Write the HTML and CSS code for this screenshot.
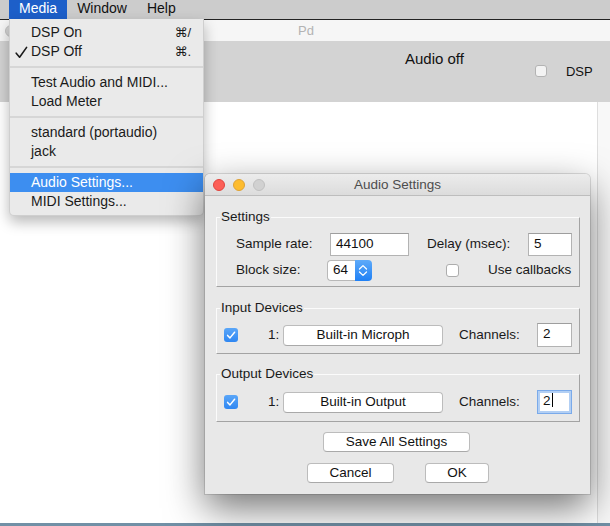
FILE: index.html
```html
<!DOCTYPE html>
<html>
<head>
<meta charset="utf-8">
<title>Pd - Audio Settings</title>
<link rel="stylesheet" href="styles.css">
</head>
<body>
<div class="screen">
  <div class="menubar">
    <span class="mb-item is-open">Media</span>
    <span class="mb-item">Window</span>
    <span class="mb-item">Help</span>
  </div>

  <div class="pdwin">
    <div class="pd-title">
      <span class="pd-light"></span>
      <span class="pd-name">Pd</span>
    </div>
    <div class="pd-toolbar">
      <span class="audio-state">Audio off</span>
      <span class="dsp-toggle"><span class="tb-check"></span><span class="dsp-label">DSP</span></span>
    </div>
    <div class="pd-body">
      <div class="pd-canvas"></div>
      <div class="pd-scroll"></div>
    </div>
  </div>
  <div class="desktop-edge"></div>

  <div class="menu">
    <div class="mi"><span class="mi-check"></span><span class="mi-label">DSP On</span><span class="mi-key">⌘/</span></div>
    <div class="mi"><span class="mi-check"><svg width="13" height="13" viewBox="0 0 13 13"><polyline points="1.2,7.2 4.6,11.2 11.6,1.4" fill="none" stroke="#1a1a1a" stroke-width="1.6" stroke-linecap="round" stroke-linejoin="round"/></svg></span><span class="mi-label">DSP Off</span><span class="mi-key">⌘.</span></div>
    <div class="msep"></div>
    <div class="mi"><span class="mi-check"></span><span class="mi-label">Test Audio and MIDI...</span></div>
    <div class="mi"><span class="mi-check"></span><span class="mi-label">Load Meter</span></div>
    <div class="msep"></div>
    <div class="mi"><span class="mi-check"></span><span class="mi-label">standard (portaudio)</span></div>
    <div class="mi"><span class="mi-check"></span><span class="mi-label">jack</span></div>
    <div class="msep"></div>
    <div class="mi is-hl"><span class="mi-check"></span><span class="mi-label">Audio Settings...</span></div>
    <div class="mi"><span class="mi-check"></span><span class="mi-label">MIDI Settings...</span></div>
  </div>

  <div class="dialog">
    <div class="dlg-title">
      <div class="lights">
        <span class="light red"></span>
        <span class="light yellow"></span>
        <span class="light gray"></span>
      </div>
      <div class="dlg-name">Audio Settings</div>
      <div></div>
    </div>
    <div class="dlg-body">
      <fieldset class="group g-settings">
        <legend>Settings</legend>
        <div class="row row-a">
          <span class="lbl w-sr">Sample rate:</span>
          <span class="entry w-rate">44100</span>
          <span class="lbl w-delay">Delay (msec):</span>
          <span class="entry w-delayv">5</span>
        </div>
        <div class="row row-b">
          <span class="lbl w-bs">Block size:</span>
          <span class="popup">
            <span class="popup-val">64</span>
            <span class="popup-arrows">
              <svg width="17" height="21" viewBox="0 0 17 21">
                <polyline points="4.5,9 8,5.6 11.5,9" fill="none" stroke="#fff" stroke-width="1.3" stroke-linecap="round" stroke-linejoin="round"/>
                <polyline points="4.5,12 8,15.4 11.5,12" fill="none" stroke="#fff" stroke-width="1.3" stroke-linecap="round" stroke-linejoin="round"/>
              </svg>
            </span>
          </span>
          <span class="check"></span>
          <span class="lbl cb-lbl">Use callbacks</span>
        </div>
      </fieldset>

      <fieldset class="group g-input">
        <legend>Input Devices</legend>
        <div class="row dev-row">
          <span class="check-on">
            <svg width="14" height="14" viewBox="0 0 14 14"><polyline points="3.6,7.4 6,9.9 10.6,4.2" fill="none" stroke="#fff" stroke-width="1.5" stroke-linecap="round" stroke-linejoin="round"/></svg>
          </span>
          <span class="lbl num">1:</span>
          <span class="btn dev-btn">Built-in Microph</span>
          <span class="lbl ch-lbl">Channels:</span>
          <span class="entry w-ch">2</span>
        </div>
      </fieldset>

      <fieldset class="group g-output">
        <legend>Output Devices</legend>
        <div class="row dev-row">
          <span class="check-on">
            <svg width="14" height="14" viewBox="0 0 14 14"><polyline points="3.6,7.4 6,9.9 10.6,4.2" fill="none" stroke="#fff" stroke-width="1.5" stroke-linecap="round" stroke-linejoin="round"/></svg>
          </span>
          <span class="lbl num">1:</span>
          <span class="btn dev-btn">Built-in Output</span>
          <span class="lbl ch-lbl">Channels:</span>
          <span class="entry w-ch is-focus">2<span class="caret"></span></span>
        </div>
      </fieldset>

      <div class="actions">
        <span class="btn save-btn">Save All Settings</span>
      </div>
      <div class="actions actions-2">
        <span class="btn cancel-btn">Cancel</span>
        <span class="btn ok-btn">OK</span>
      </div>
    </div>
  </div>
</div>
</body>
</html>
```

FILE: styles.css
```css
* { box-sizing: border-box; }
html, body { margin: 0; padding: 0; }
body {
  width: 610px;
  height: 526px;
  overflow: hidden;
  font-family: "Liberation Sans", Arial, "DejaVu Sans", sans-serif;
  color: #1a1a1a;
}
.screen {
  position: relative;
  width: 610px;
  height: 526px;
  overflow: hidden;
  background: #fff;
}

/* menu bar */
.menubar {
  height: 20px;
  background: #cccccc;
  border-bottom: 1px solid #222;
  display: flex;
  padding-left: 9px;
  font-size: 14px;
}
.mb-item {
  padding: 0 10px;
  height: 19px;
  line-height: 16px;
  color: #111;
}
.mb-item.is-open { background: #1d5fc9; color: #fff; }

/* Pd window */
.pd-title {
  height: 21px;
  background: #f6f6f6;
  display: flex;
  align-items: center;
}
.pd-light {
  width: 12px;
  height: 12px;
  margin-left: 5px;
  border-radius: 50%;
  background: #d5d5d5;
  border: 1px solid #c2c2c2;
}
.pd-name {
  margin-left: 281px;
  font-size: 13px;
  color: #b3b3b3;
}
.pd-toolbar {
  height: 61px;
  background: #d3d3d3;
  display: flex;
  align-items: flex-start;
}
.audio-state {
  margin-left: 405px;
  margin-top: 9px;
  font-size: 15px;
  line-height: 17px;
  color: #111;
}
.dsp-toggle {
  display: flex;
  align-items: center;
  height: 16px;
  margin-top: 22px;
  margin-left: 71px;
}
.tb-check {
  width: 12px;
  height: 12px;
  border: 1px solid #b3b3b3;
  border-radius: 3px;
  background: #f3f3f3;
}
.dsp-label {
  margin-left: 19px;
  font-size: 13px;
  color: #111;
}
.pd-body {
  height: 421px;
  display: flex;
}
.pd-canvas { flex: 1; background: #fff; }
.pd-scroll {
  width: 13px;
  background: #f8f8f8;
  border-left: 1px solid #dedede;
}
.desktop-edge {
  height: 3px;
  background: #7190a6;
}

/* dropdown menu */
.menu {
  position: absolute;
  left: 9px;
  top: 19px;
  width: 195px;
  padding: 4px 0;
  background: #eaeaea;
  border: 1px solid #cfcfcf;
  border-top: none;
  border-radius: 0 0 5px 5px;
  box-shadow: 0 6px 14px rgba(0, 0, 0, 0.28);
  font-size: 14px;
}
.mi {
  display: flex;
  align-items: center;
  height: 19px;
  line-height: 19px;
  padding: 0 12px 0 4px;
  color: #1a1a1a;
  white-space: nowrap;
}
.mi-check {
  width: 17px;
  height: 19px;
  display: flex;
  align-items: center;
}
.mi-check svg { display: block; margin-left: 1px; margin-top: 1px; }
.mi-label { flex: 1; }
.mi-key { font-size: 13px; }
.mi.is-hl { background: #3d8ef0; color: #fff; }
.msep {
  height: 2px;
  margin: 5px 0;
  background: #d6d6d6;
}

/* dialog */
.dialog {
  position: absolute;
  left: 205px;
  top: 174px;
  width: 385px;
  border-radius: 5px 5px 0 0;
  background: #e8e8e8;
  box-shadow: 0 14px 38px rgba(0, 0, 0, 0.55), 0 0 0 1px rgba(0, 0, 0, 0.12);
}
.dlg-title {
  height: 22px;
  display: grid;
  grid-template-columns: 1fr auto 1fr;
  align-items: center;
  background: linear-gradient(#ececec, #dcdcdc);
  border-bottom: 1px solid #bdbdbd;
  border-radius: 5px 5px 0 0;
}
.lights { display: flex; gap: 8px; padding-left: 8px; }
.light {
  width: 12px;
  height: 12px;
  border-radius: 50%;
}
.light.red { background: #fc5f57; border: 1px solid #e0443e; }
.light.yellow { background: #fdbc2e; border: 1px solid #dea236; }
.light.gray { background: #d1d1d1; border: 1px solid #c0c0c0; }
.dlg-name {
  font-size: 13.5px;
  color: #4d4d4d;
}
.dlg-body {
  padding: 0 10px 11px 11px;
}

.group {
  margin: 0;
  min-width: 0;
  border: 1px solid;
  border-color: #fbfbfb #a3a3a3 #a3a3a3 #fbfbfb;
  padding: 8px 0 5px 0;
}
.group legend {
  margin-left: 3px;
  padding: 0 1px;
  font-size: 13.5px;
  line-height: 16px;
  color: #1a1a1a;
}
.g-settings { margin-top: 13px; }
.g-input { margin-top: 13px; padding: 7px 0 6px 0; }
.g-output { margin-top: 12px; padding: 8px 0 7px 0; }

.row { display: flex; align-items: center; }
.lbl {
  font-size: 13.5px;
  white-space: nowrap;
  padding-bottom: 2px;
}
.row-a { height: 23px; }
.row-b { height: 21px; margin-top: 4px; }
.w-sr { margin-left: 19px; width: 94px; }
.w-delay { margin-left: 18px; width: 101px; }
.w-bs { margin-left: 19px; width: 91px; }

.entry {
  display: block;
  height: 23px;
  background: #fff;
  border: 1px solid #b3b3b3;
  border-top-color: #9e9e9e;
  padding-left: 5px;
  font-size: 13.5px;
  line-height: 19px;
  color: #111;
}
.w-rate { width: 79px; }
.w-delayv { width: 44px; }
.w-ch { width: 35px; height: 24px; line-height: 20px; }
.entry.is-focus {
  border: 1px solid #7aaaea;
  box-shadow: inset 0 0 0 2px #b2cff4;
}
.caret {
  display: inline-block;
  width: 1px;
  height: 14px;
  background: #000;
  vertical-align: -2px;
  margin-left: 1px;
}

.popup {
  display: flex;
  width: 45px;
  height: 21px;
}
.popup-val {
  flex: 1;
  background: #fff;
  border: 1px solid #b8b8b8;
  border-right: none;
  border-radius: 4px 0 0 4px;
  font-size: 13.5px;
  line-height: 17px;
  padding-left: 5px;
  color: #111;
}
.popup-arrows {
  width: 17px;
  height: 21px;
  background: linear-gradient(#5eaaf9, #1f80f5);
  border-radius: 0 4px 4px 0;
  display: block;
}
.popup-arrows svg { display: block; }

.check {
  width: 13px;
  height: 13px;
  margin-left: 74px;
  background: #fff;
  border: 1px solid #adadad;
  border-radius: 3px;
}
.cb-lbl { margin-left: 29px; }

.check-on {
  width: 14px;
  height: 14px;
  margin-left: 7px;
  border-radius: 3px;
  background: linear-gradient(#5aa6f8, #2f87f2);
  display: block;
}
.check-on svg { display: block; }
.num { margin-left: 30px; width: 15px; }
.ch-lbl { margin-left: 16px; width: 78px; }

.btn {
  display: block;
  height: 21px;
  background: #fff;
  border: 1px solid #bcbcbc;
  border-bottom-color: #a9a9a9;
  border-radius: 4px;
  font-size: 13.5px;
  line-height: 18px;
  text-align: center;
  color: #111;
}
.dev-btn { width: 160px; }

.actions {
  display: flex;
  justify-content: center;
  margin-top: 10px;
}
.actions-2 { margin-top: 11px; gap: 31px; }
.save-btn { width: 147px; height: 20px; line-height: 17px; margin-right: 3px; }
.cancel-btn { width: 87px; height: 20px; line-height: 17px; }
.ok-btn { width: 64px; height: 20px; line-height: 17px; }
```
